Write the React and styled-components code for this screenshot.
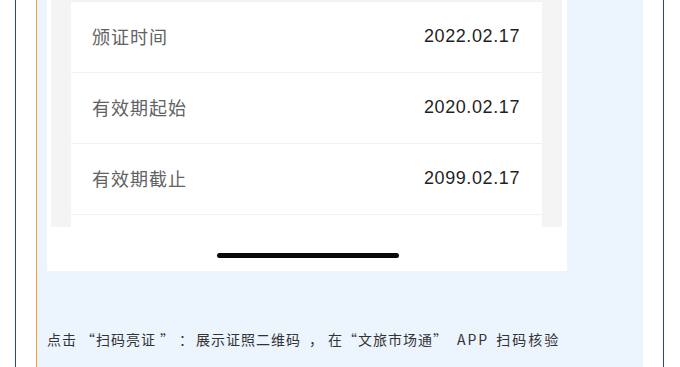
import React from "react";
import styled, { createGlobalStyle } from "styled-components";

const Global = createGlobalStyle`
  html, body { margin: 0; padding: 0; background: #ffffff; }
  body { font-family: "Noto Sans CJK SC", "Noto Sans", sans-serif; }
  #root { height: 367px; overflow: hidden; }
`;

const Frame = styled.div`
  box-sizing: border-box;
  margin-left: 15px;
  width: 649px;
  height: 367px;
  border-left: 1px solid #2b4a6b;
  border-right: 1px solid #2b4a6b;
  padding: 0 20px;
  display: flex;
`;

const Quote = styled.section`
  flex: 1;
  background: #ecf4fd;
  border-left: 1px solid #f59a32;
  padding-left: 10px;
  display: flex;
  flex-direction: column;
`;

const Shot = styled.div`
  width: 520px;
  height: 271px;
  background: #ffffff;
  display: flex;
  flex-direction: column;
`;

const Screen = styled.div`
  margin: 0 5px 0 4px;
  height: 227px;
  background: #f4f4f4;
  padding: 1px 20px 0;
  box-sizing: border-box;
`;

const Card = styled.div`
  background: #ffffff;
  height: 100%;
  border-top: 1px solid #f1f1f1;
  box-sizing: border-box;
`;

const Row = styled.div`
  height: 71px;
  box-sizing: border-box;
  border-bottom: 1px solid #f1f1f1;
  display: flex;
  align-items: center;
  justify-content: space-between;
  padding: 0 22px 2px 21px;
`;

const Label = styled.span`
  font-family: "Noto Sans CJK SC", sans-serif;
  font-size: 18px;
  line-height: 1;
  letter-spacing: 1px;
  color: #626262;
`;

const Value = styled.span`
  font-family: "Liberation Sans", Arial, sans-serif;
  font-size: 18px;
  line-height: 1;
  letter-spacing: 0.6px;
  color: #1f1f1f;
`;

const HomeArea = styled.div`
  flex: 1;
  display: flex;
  justify-content: center;
  padding: 26px 0 0 2px;
  box-sizing: border-box;
`;

const HomeBar = styled.div`
  width: 182px;
  height: 5px;
  border-radius: 3px;
  background: #0a0a0a;
`;

const Caption = styled.p`
  margin: 56px 0 0;
  font-family: "Noto Sans CJK SC", sans-serif;
  font-size: 14px;
  line-height: 24px;
  letter-spacing: 1px;
  color: #333333;
  white-space: nowrap;
  text-spacing-trim: space-all;
`;

const Punct = styled.span`
  margin-left: ${(p) => p.$l || 0}px;
  margin-right: ${(p) => p.$r || 0}px;
`;

const Latin = styled.span`
  letter-spacing: 2px;
  margin: 0 7px 0 ${(p) => p.$l || 0}px;
`;

const Tail = styled.span`
  letter-spacing: 2px;
`;

const rows = [
  ["颁证时间", "2022.02.17"],
  ["有效期起始", "2020.02.17"],
  ["有效期截止", "2099.02.17"],
];

export default function App() {
  return (
    <>
      <Global />
      <Frame lang="zh-CN">
        <Quote>
          <Shot>
            <Screen>
              <Card>
                {rows.map(([k, v]) => (
                  <Row key={k}>
                    <Label>{k}</Label>
                    <Value>{v}</Value>
                  </Row>
                ))}
              </Card>
            </Screen>
            <HomeArea>
              <HomeBar />
            </HomeArea>
          </Shot>
          <Caption>
            点击<Punct $l={4}>“</Punct>扫码亮证<Punct $l={4}>”</Punct>
            <Punct $l={4} $r={2}>：</Punct>展示证照二维码<Punct $l={8} $r={4}>，</Punct>在
            <Punct>“</Punct>文旅市场通<Punct>”</Punct>
            <Latin $l={9}>APP</Latin>
            <Tail>扫码核验</Tail>
          </Caption>
        </Quote>
      </Frame>
    </>
  );
}
